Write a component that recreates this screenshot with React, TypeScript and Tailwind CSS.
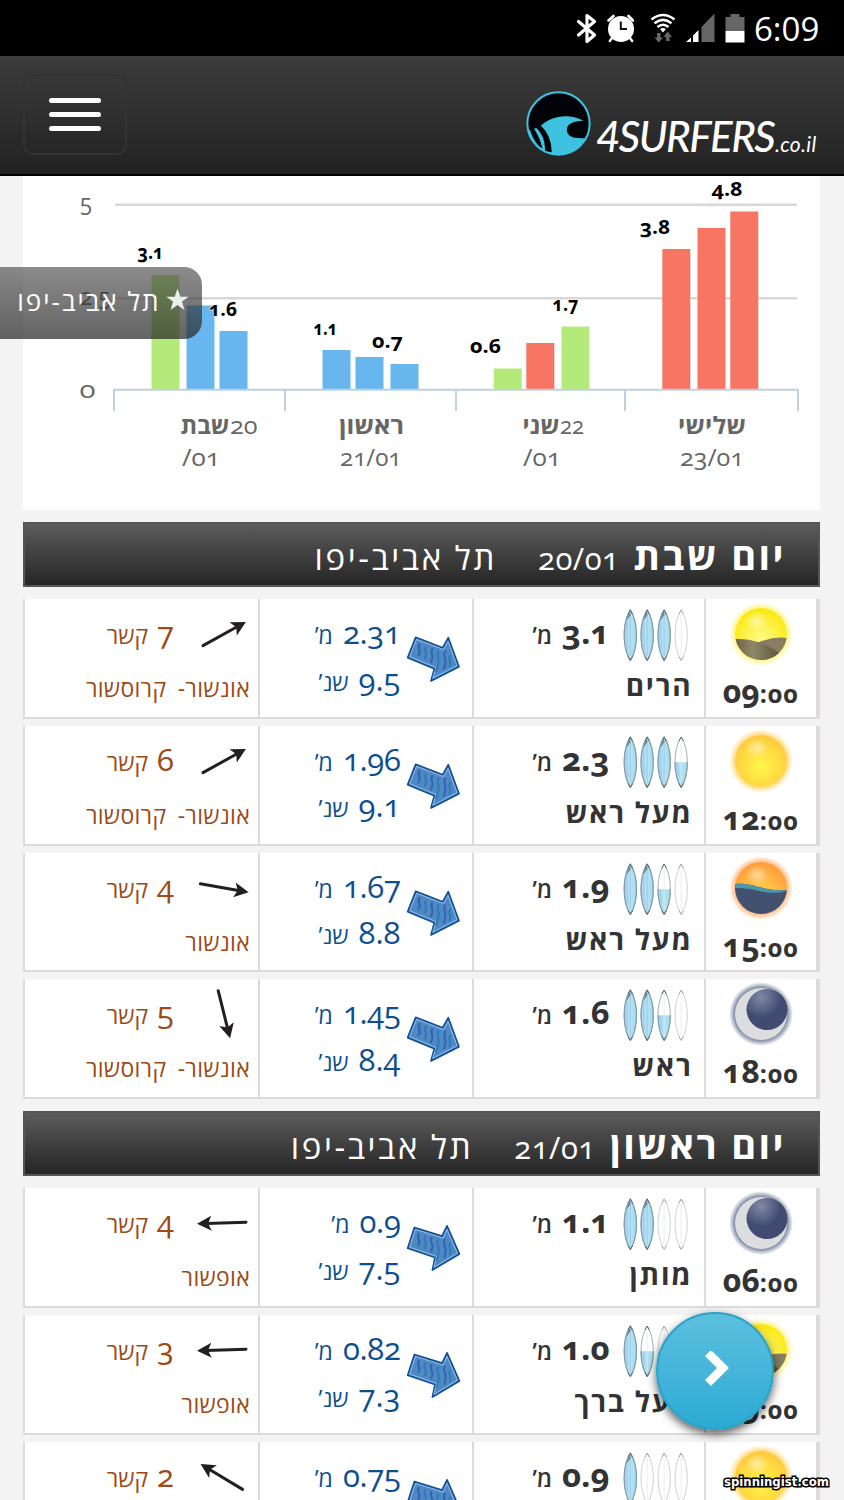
import React from 'react';

type Sky = 'dawn' | 'sun' | 'dusk' | 'moon';

interface Slot {
  hour: string;
  sky: Sky;
  boards: number;
  height: string;
  label: string;
  swell: string;
  period: string;
  swellTurn: number;
  wind: string;
  windAngle: number;
  shore: string;
}

interface Day {
  name: string;
  date: string;
  slots: Slot[];
}

const CITY = 'תל אביב-יפו';

const DAYS: Day[] = [
  {
    name: 'יום שבת',
    date: '20/01',
    slots: [
      { hour: '09', sky: 'dawn', boards: 3, height: '3.1', label: 'הרים', swell: '2.31', period: '9.5', swellTurn: 0, wind: '7', windAngle: -29, shore: 'אונשור- קרוסשור' },
      { hour: '12', sky: 'sun', boards: 3.5, height: '2.3', label: 'מעל ראש', swell: '1.96', period: '9.1', swellTurn: 0, wind: '6', windAngle: -29, shore: 'אונשור- קרוסשור' },
      { hour: '15', sky: 'dusk', boards: 2.5, height: '1.9', label: 'מעל ראש', swell: '1.67', period: '8.8', swellTurn: 0, wind: '4', windAngle: 10, shore: 'אונשור' },
      { hour: '18', sky: 'moon', boards: 2.5, height: '1.6', label: 'ראש', swell: '1.45', period: '8.4', swellTurn: 0, wind: '5', windAngle: 76, shore: 'אונשור- קרוסשור' },
    ],
  },
  {
    name: 'יום ראשון',
    date: '21/01',
    slots: [
      { hour: '06', sky: 'moon', boards: 2, height: '1.1', label: 'מותן', swell: '0.9', period: '7.5', swellTurn: -3.5, wind: '4', windAngle: 178, shore: 'אופשור' },
      { hour: '09', sky: 'dawn', boards: 1.5, height: '1.0', label: 'מעל ברך', swell: '0.82', period: '7.3', swellTurn: -3.5, wind: '3', windAngle: 178, shore: 'אופשור' },
      { hour: '12', sky: 'sun', boards: 1, height: '0.9', label: 'ברך', swell: '0.75', period: '7.1', swellTurn: -3.5, wind: '2', windAngle: 211, shore: 'אופשור' },
    ],
  },
];

function StatusBar() {
  return (
    <div dir="ltr" className="flex h-14 shrink-0 items-start justify-end bg-black pr-[23px]">
      <svg className="mt-3 h-8 w-6" viewBox="574 12 24 32" fill="none" stroke="#fff" strokeWidth="3.2" strokeLinejoin="round" strokeLinecap="round">
        <path d="M578.5 21.5 L594.5 35 L587 41.5 V15.5 L594.5 21.5 L578.5 35" />
      </svg>
      <svg className="ml-2 mt-3 h-8 w-7" viewBox="606 12 28 32">
        <circle cx="621" cy="29" r="13" fill="#fff" />
        <path d="M608.5 20.5 L613.5 16 M633 20.5 L628.5 16" stroke="#fff" strokeWidth="2.6" strokeLinecap="round" />
        <path d="M612 38 L609.8 41 M630 38 L632.2 41" stroke="#fff" strokeWidth="2.4" strokeLinecap="round" />
        <path d="M620.8 21.5 V29 H627" stroke="#111" strokeWidth="2" fill="none" />
      </svg>
      <svg className="ml-4 mt-3 h-8 w-7" viewBox="650 12 28 32" fill="none" stroke="#fff" strokeWidth="2.5">
        <path d="M651.5 19.5 Q663 10.5 674.5 19.5" />
        <path d="M654.5 23.3 Q663 16.5 671.5 23.3" />
        <path d="M657.5 27 Q663 22.5 668.5 27" />
        <path d="M660 29 Q663 27 666 29 L663 32.5Z" fill="#fff" stroke="none" />
        <path d="M657 33 h3.5 v4.5 h2.5 l-4.3 5 -4.3 -5 h2.6Z M666 41 h3.5 v-4 h2.5 l-4.3 -5.5 -4.3 5.5 h2.6Z" fill="#666" stroke="none" />
      </svg>
      <svg className="ml-2 mt-3 h-8 w-8" viewBox="685.5 12 32 32">
        <path d="M685.5 42 L690.5 37.5 V42Z M692.5 35.5 L698 30 V42 H692.5Z" fill="#fff" />
        <path d="M701 27 L714 13.5 V42 H701Z" fill="#666" />
      </svg>
      <svg className="ml-1.5 mt-3 h-8 w-6" viewBox="724 12 24 32">
        <path d="M730.5 14 h9 v3 h5 V31 H725.5 V17 h5Z" fill="#666" />
        <rect x="725.5" y="31" width="19" height="11.5" fill="#fff" />
      </svg>
      <span className="ml-1.5 mt-[7px] w-[67px] whitespace-nowrap font-['Open_Sans'] text-[33px] leading-[44px] text-white">6:09</span>
    </div>
  );
}

function Header() {
  return (
    <header dir="ltr" className="flex h-[120px] shrink-0 items-start justify-between border-b-2 border-black bg-linear-to-b from-[#3c3c3c] to-[#222] pl-[23px] pr-[27px]">
      <button className="mt-[18px] flex h-[81px] w-[104px] flex-col items-center justify-center gap-[9px] rounded-[10px] border-2 border-[#333]">
        <span className="h-[5px] w-[52px] rounded-sm bg-white" />
        <span className="h-[5px] w-[52px] rounded-sm bg-white" />
        <span className="h-[5px] w-[52px] rounded-sm bg-white" />
      </button>
      <div className="flex items-start">
        <svg className="mt-[34px] h-[67px] w-[67px]" viewBox="75 270 200 200">
          <clipPath id="logo"><circle cx="175" cy="370" r="92" /></clipPath>
          <circle cx="175" cy="370" r="93" fill="#020308" />
          <g clipPath="url(#logo)">
            <path d="M70 385 L105 385 L126 374 C150 352 200 336 250 362 C215 362 198 374 200 392 C203 412 222 418 280 412 V480 H70Z" fill="#3dc3df" />
            <path d="M70 375 L90 390 Q104 432 128 446 Q120 410 101 384 L108 383 Q138 410 134 455 L155 456 Q154 405 122 376 L100 360Z" fill="#020308" />
            <path d="M108 388 Q124 410 132 450" stroke="#3dc3df" strokeWidth="7" fill="none" />
          </g>
          <circle cx="175" cy="370" r="93" fill="none" stroke="#3dc3df" strokeWidth="6" />
        </svg>
        <div className="ml-1 mt-[54px] flex w-[221px] items-baseline whitespace-nowrap text-white">
          <span className="w-[179px] font-['Lato'] text-[42px] font-medium italic leading-[52px] tracking-[-1.5px]">4SURFERS</span>
          <span className="font-['Lato'] text-[21px] italic tracking-[0.3px]">.co.il</span>
        </div>
      </div>
    </header>
  );
}

const BLUE = '#67b7ee';
const GREEN = '#b3ea7a';
const RED = '#f67663';

const BARS: [number, number, string][] = [
  [151.5, 275, GREEN], [186.5, 305.5, BLUE], [219.5, 331, BLUE],
  [322.5, 350, BLUE], [355.5, 357, BLUE], [390.5, 364, BLUE],
  [493.7, 368.5, GREEN], [526.3, 343, RED], [561.5, 326.5, GREEN],
  [662.3, 249, RED], [697.5, 228, RED], [730.3, 211.5, RED],
];

const VALUES: [number, number, string, number][] = [
  [137.5, 259, '3.1', 26], [209, 315.5, '1.6', 28], [313.5, 334.5, '1.1', 24], [372, 348, '0.7', 31],
  [470, 352.5, '0.6', 31], [552.5, 311, '1.7', 26], [640, 233.5, '3.8', 30], [711.5, 196, '4.8', 31],
];

function Chart() {
  return (
    <svg direction="ltr" className="mr-6 h-[334px] w-[797px] shrink-0 bg-white font-['Open_Sans'] oldstyle-nums" viewBox="23 176 797 334">
      <path d="M115 204.7 H797 M115 298.3 H797" stroke="#d8d8d8" strokeWidth="2.4" />
      {BARS.map(([x, y, c]) => (
        <rect key={x} x={x} y={y} width="28" height={389 - y} fill={c} />
      ))}
      <path d="M113 389.7 H799 M114 389 V411 M285 389 V411 M456 389 V411 M625 389 V411 M798 389 V411" stroke="#c0d0e0" strokeWidth="2" fill="none" />
      <g fill="#666" fontSize="23.5">
        <text x="80" y="211" textLength="12" lengthAdjust="spacingAndGlyphs">5</text>
        <text x="80" y="305" textLength="31" lengthAdjust="spacingAndGlyphs">2.5</text>
        <text x="79.5" y="398" textLength="16" lengthAdjust="spacingAndGlyphs">0</text>
        <text x="180.5" y="433.5" fontWeight="700" textLength="49" lengthAdjust="spacingAndGlyphs">שבת</text>
        <text x="230" y="433.5" textLength="27.5" lengthAdjust="spacingAndGlyphs">20</text>
        <text x="182" y="466" textLength="38" lengthAdjust="spacingAndGlyphs">/01</text>
        <text x="339" y="433.5" fontWeight="700" textLength="65" lengthAdjust="spacingAndGlyphs">ראשון</text>
        <text x="340" y="466" textLength="61.5" lengthAdjust="spacingAndGlyphs">21/01</text>
        <text x="522.5" y="433.5" fontWeight="700" textLength="37" lengthAdjust="spacingAndGlyphs">שני</text>
        <text x="560" y="433.5" textLength="24" lengthAdjust="spacingAndGlyphs">22</text>
        <text x="523" y="466" textLength="38" lengthAdjust="spacingAndGlyphs">/01</text>
        <text x="678" y="433.5" fontWeight="700" textLength="68" lengthAdjust="spacingAndGlyphs">שלישי</text>
        <text x="680" y="466" textLength="64" lengthAdjust="spacingAndGlyphs">23/01</text>
      </g>
      <g fill="#000" stroke="#fff" strokeWidth="1" paintOrder="stroke" fontSize="20" fontWeight="700">
        {VALUES.map(([x, y, t, w]) => (
          <text key={x} x={x} y={y} textLength={w} lengthAdjust="spacingAndGlyphs">{t}</text>
        ))}
      </g>
    </svg>
  );
}

function Boards({ count }: { count: number }) {
  return (
    <svg className="h-[52px] w-[66px] shrink-0" viewBox="602 283 198 156">
      <defs>
        <linearGradient id="board">
          <stop offset="0" stopColor="#a4d4f2" />
          <stop offset=".5" stopColor="#b8e3f6" />
          <stop offset="1" stopColor="#9cdde8" />
        </linearGradient>
        <clipPath id="half"><rect x="600" y="362" width="200" height="80" /></clipPath>
      </defs>
      {[624, 674.5, 725.5, 776.5].map((cx, i) => {
        const fill = Math.min(1, Math.max(0, count - i));
        const d = `M${cx} 286 C${cx + 25} 325 ${cx + 24} 400 ${cx} 437 C${cx - 24} 400 ${cx - 25} 325 ${cx} 286Z`;
        const tips = `M${cx - 7} 299 L${cx} 286 L${cx + 7} 299 M${cx - 7} 426 L${cx} 437 L${cx + 7} 426`;
        return (
          <g key={cx}>
            <path d={d} fill="#fff" stroke={fill > 0 ? '#a5acae' : '#cfd2d2'} strokeWidth="3" />
            {fill > 0 && (
              <g clipPath={fill < 1 ? 'url(#half)' : undefined}>
                <path d={d} fill="url(#board)" stroke="#849ba1" strokeWidth="3.5" />
                <path d={`M${cx - 9} 320 Q${cx - 14} 360 ${cx - 8} 405`} stroke="#8ec3e6" strokeWidth="2" fill="none" />
                {fill === 1 && <path d={`M${cx - 12} 319 Q${cx - 7} 300 ${cx} 291 L${cx + 1} 301Z`} fill="#5f8291" />}
              </g>
            )}
            <path d={`M${cx} 300 V424`} stroke={fill === 1 ? '#8fbfdc' : '#dfe5e8'} strokeWidth="2" />
            <path d={tips} stroke={fill > 0 ? '#646b6b' : '#aaa'} strokeWidth="3" fill="none" />
          </g>
        );
      })}
    </svg>
  );
}

function SwellArrow({ turn }: { turn: number }) {
  return (
    <svg className="h-12 w-[57px] shrink-0" viewBox="1215 145 171 144">
      <g transform={`rotate(${turn} 1300 215)`}>
        <path d="M1247 152 L1328 183 L1345 153 L1377 240 L1293 283 L1303 246 L1223 213Z" fill="#4b86c2" stroke="#0f4f97" strokeWidth="5" strokeLinejoin="round" />
        <path d="M1250 158 L1331 189 L1344 164 L1371 237 L1298 275 L1308 243 L1229 210Z" fill="#5089c2" stroke="#9cc5ea" strokeWidth="2.5" />
        <g fill="none" strokeWidth="6">
          <path d="M1260 170 q-7 9 -2 18 q4 10 -4 20 M1298 185 q-7 9 -2 18 q4 10 -4 26 M1337 192 q-7 9 -2 22 q4 12 -4 34" stroke="#2f63b8" />
          <path d="M1279 178 q-7 9 -2 18 q4 10 -4 22 M1317 192 q-7 9 -2 22 q4 14 -8 42 M1352 205 q-7 9 -2 18 q2 9 -2 18" stroke="#2a7bb8" />
        </g>
      </g>
    </svg>
  );
}

function WindArrow({ angle }: { angle: number }) {
  const shift = angle < 90 ? 2 : 0;
  return (
    <svg className="ml-0.5 mr-0.5 h-[52px] w-[52px] shrink-0 overflow-visible" viewBox="-26 -26 52 52">
      <g transform={`translate(${shift} 0) rotate(${angle})`}>
        <path d="M-24 0 H16" stroke="#231f20" strokeWidth="3" strokeLinecap="round" />
        <path d="M25 0 L10.5 -7.5 L14 0 L10.5 7.5Z" fill="#231f20" />
      </g>
    </svg>
  );
}

function SkyIcon({ kind }: { kind: Sky }) {
  const glow = { dawn: '#fff04a', sun: '#ffc93f', dusk: '#ff9a45', moon: '#34466d' }[kind];
  return (
    <svg className="h-[66px] w-[66px] shrink-0" viewBox="-33 -33 66 66">
      <defs>
        <radialGradient id={`glow-${kind}`}>
          <stop offset=".78" stopColor={glow} stopOpacity=".75" />
          <stop offset="1" stopColor={glow} stopOpacity="0" />
        </radialGradient>
        <radialGradient id="g-dawn" cx=".5" cy=".6" r=".6"><stop offset="0" stopColor="#fffb8a" /><stop offset="1" stopColor="#fbe80d" /></radialGradient>
        <radialGradient id="g-sun" cx=".5" cy=".6" r=".6"><stop offset="0" stopColor="#fff648" /><stop offset="1" stopColor="#ffc93f" /></radialGradient>
        <radialGradient id="g-dusk" cx=".5" cy=".65" r=".65"><stop offset="0" stopColor="#ffd94a" /><stop offset="1" stopColor="#ff9b3c" /></radialGradient>
        <radialGradient id="g-moon" cx=".35" cy=".2" r=".5"><stop offset="0" stopColor="#8189a5" /><stop offset="1" stopColor="#414b72" /></radialGradient>
        <radialGradient id="shine"><stop offset="0" stopColor="#fff" stopOpacity=".5" /><stop offset="1" stopColor="#fff" stopOpacity="0" /></radialGradient>
        <linearGradient id="hill"><stop offset="0" stopColor="#6a6044" /><stop offset=".4" stopColor="#8f8768" /><stop offset="1" stopColor="#5e543b" /></linearGradient>
        <clipPath id="disc"><circle r="26" /></clipPath>
      </defs>
      <circle r="32" fill={`url(#glow-${kind})`} />
      {kind === 'moon' ? (
        <g>
          <circle r="26" fill="#dcdddf" />
          <circle cx="6" cy="-4.5" r="20.5" fill="url(#g-moon)" />
        </g>
      ) : (
        <g clipPath="url(#disc)">
          <circle r="26" fill={`url(#g-${kind})`} />
          <ellipse cx="-4" cy="-13" rx="12" ry="10" fill="url(#shine)" />
          {kind === 'dawn' && (
            <g>
              <path d="M-4 9 Q12 2 27 4 V27 H0Z" fill="#877d62" />
              <path d="M-27 5 Q0 4 19 20 L10 28 H-27Z" fill="url(#hill)" />
            </g>
          )}
          {kind === 'dusk' && (
            <g>
              <path d="M-27 -4 C-6 -6 2 4 27 2 V28 H-27Z" fill="#41516f" />
              <path d="M-27 -4 C-6 -6 2 4 27 2 C12 8 0 3 -10 1 Q-20 0 -27 0Z" fill="#4b97ae" />
            </g>
          )}
        </g>
      )}
    </svg>
  );
}

function SlotRow({ s }: { s: Slot }) {
  return (
    <div className="mb-[7px] flex h-[119.7px] shrink-0 border-b-[2.5px] border-r-[4px] border-[#dfdada] bg-white last:mb-0">
      <div className="flex w-[112.5px] flex-col items-center border-l-2 border-[#dfdada] pt-[2px]">
        <SkyIcon kind={s.sky} />
        <div dir="ltr" className="flex h-11 items-baseline font-bold leading-[48px] text-[#333]">
          <span className="text-[32px]">{s.hour}</span>
          <span className="text-[25px] tracking-[1px]">:00</span>
        </div>
      </div>
      <div className="flex w-[232px] flex-col border-l-2 border-[#dfdada] pr-[11px] text-[#333]">
        <div className="flex h-[66px] items-start pr-1 pt-2.5">
          <Boards count={s.boards} />
          <div className="mr-[13px] flex h-[50px] items-baseline gap-2.5 leading-[45px]">
            <span className="text-[33px] font-bold">{s.height}</span>
            <span className="text-[23px] font-semibold">מ’</span>
          </div>
        </div>
        <div className="text-[28px] font-bold leading-10 tracking-[1.8px]">{s.label}</div>
      </div>
      <div className="flex w-[213.5px] border-l-2 border-[#dfdada] pr-2.5 pt-3 text-[#0d4f8e]">
        <div className="pt-6"><SwellArrow turn={s.swellTurn} /></div>
        <div className="mr-1 flex flex-col">
          <div className="flex h-[47.5px] items-baseline gap-2.5 leading-[42px]">
            <span className="text-[31px] font-medium tracking-[-0.3px]">{s.swell}</span>
            <span className="text-[23px]">מ’</span>
          </div>
          <div className="flex h-[47.5px] items-baseline gap-2.5 leading-[41px]">
            <span className="text-[31px] font-medium">{s.period}</span>
            <span className="text-[23px]">שנ’</span>
          </div>
        </div>
      </div>
      <div className="flex grow flex-col border-l-2 border-[#dfdada] pr-2 pt-[9px] text-[#9d4a17]">
        <div className="flex h-[56px] items-start">
          <WindArrow angle={s.windAngle} />
          <div className="mr-5 flex items-baseline gap-[9px] leading-[48px]">
            <span className="text-[31px] font-medium">{s.wind}</span>
            <span className="text-[23px]">קשר</span>
          </div>
        </div>
        <div className="whitespace-nowrap text-[23px] leading-[48px] tracking-[0.3px] [word-spacing:5px]">{s.shore}</div>
      </div>
    </div>
  );
}

function DaySection({ day }: { day: Day }) {
  return (
    <section className="mr-6 mt-[11.8px] flex w-[797px] shrink-0 flex-col">
      <h2 className="mb-[12px] flex h-[65.5px] shrink-0 items-baseline border-2 border-[#555] bg-linear-to-b from-[#5c5c5c] to-[#262626] pr-8 leading-[62px] text-white">
        <span className="text-[38px] font-bold tracking-[2.4px]">{day.name}</span>
        <span dir="ltr" className="mr-3.5 text-[31px] tracking-[0.5px]">{day.date}</span>
        <span className="mr-[41px] text-[33px] tracking-[2.6px]">{CITY}</span>
      </h2>
      <div className="flex flex-col">
        {day.slots.map((s) => (
          <SlotRow key={s.hour} s={s} />
        ))}
      </div>
    </section>
  );
}

export default function App() {
  return (
    <div dir="rtl" className="relative flex h-[1500px] w-[844px] flex-col overflow-hidden bg-[#f3f3f3] font-['Open_Sans','DejaVu_Sans',sans-serif]">
      <StatusBar />
      <Header />
      <Chart />
      <main className="flex flex-col oldstyle-nums">
        {DAYS.map((d) => (
          <DaySection key={d.date} day={d} />
        ))}
      </main>

      <div className="absolute left-0 top-[267px] flex h-[72px] w-[201.5px] items-start rounded-r-[18px] bg-linear-to-b from-[#484848]/63 to-[#282828]/72 pr-3 pt-5 text-white">
        <svg className="h-[25px] w-[25px] shrink-0" viewBox="0 0 24 24" fill="#fff" fillOpacity=".88">
          <path d="M12 1.5 L14.7 9.3 H22.8 L16.3 14 L18.7 22 L12 17.2 L5.3 22 L7.7 14 L1.2 9.3 H9.3Z" />
        </svg>
        <span className="mr-1 whitespace-nowrap text-[26px] leading-[28px] tracking-[2px]">{CITY}</span>
      </div>

      <button className="absolute left-[656px] top-[1312px] flex h-[118px] w-[118px] items-center justify-center rounded-full border-2 border-[#28a1c8] bg-linear-to-b from-[#5bc0de] to-[#2aaad4] shadow-[0_4px_10px_rgba(0,0,0,0.65)]">
        <svg className="h-10 w-8" viewBox="-14 -20 32 40" fill="none" stroke="#fff" strokeWidth="8.5">
          <path d="M-5 -18 L10 -3 L-5 12" />
        </svg>
      </button>

      <div dir="ltr" className="absolute left-[724px] top-[1473px] whitespace-nowrap font-['DejaVu_Sans_Condensed','DejaVu_Sans'] text-[13px] font-bold leading-[18px] text-white [-webkit-text-stroke:3px_#000] [font-stretch:condensed] [paint-order:stroke_fill]">
        spinningist.com
      </div>
    </div>
  );
}
